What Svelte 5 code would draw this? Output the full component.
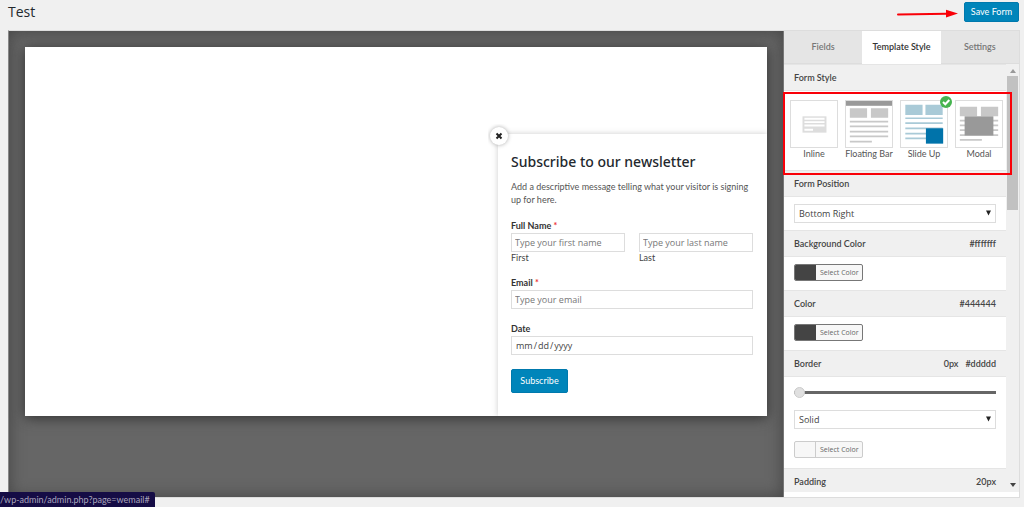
<script>
  let tabs = ["Fields", "Template Style", "Settings"];
  let activeTab = "Template Style";
  let styles = [
    { id: "inline", label: "Inline" },
    { id: "bar", label: "Floating Bar" },
    { id: "slide", label: "Slide Up" },
    { id: "modal", label: "Modal" }
  ];
  let activeStyle = "slide";
  let position = "Bottom Right";
  let borderStyle = "Solid";
  let borderWidth = 0;
  let background = "#fffffff";
  let color = "#444444";
  let borderColor = "#ddddd";
  let date = "";
</script>

<svelte:head>
  <title>Test</title>
</svelte:head>

<div class="page">
  <header>
    <h1>Test</h1>
    <svg class="arrow" viewBox="0 0 62 12" aria-hidden="true">
      <path d="M1 6.6 50 5.8" stroke="#f90008" stroke-width="2" stroke-linecap="round" />
      <path d="M49 1.8 61 5.6 49 9.4z" fill="#f90008" />
    </svg>
    <button class="primary save">Save Form</button>
  </header>

  <div class="builder">
    <main class="preview">
      <div class="canvas">
        <form class="popup" on:submit|preventDefault>
          <button type="button" class="close" aria-label="Close">
            <svg viewBox="0 0 8 8"><path d="M1.5 1.5 6.5 6.5M6.5 1.5 1.5 6.5" stroke="#222" stroke-width="2" /></svg>
          </button>
          <h2>Subscribe to our newsletter</h2>
          <p class="message">Add a descriptive message telling what your visitor is signing up for here.</p>

          <fieldset>
            <legend>Full Name <i>*</i></legend>
            <div class="names">
              <div>
                <input id="first" type="text" placeholder="Type your first name" />
                <label for="first">First</label>
              </div>
              <div>
                <input id="last" type="text" placeholder="Type your last name" />
                <label for="last">Last</label>
              </div>
            </div>
          </fieldset>

          <div class="field">
            <label for="email">Email <i>*</i></label>
            <input id="email" type="email" placeholder="Type your email" />
          </div>

          <div class="field">
            <label for="date">Date</label>
            <input id="date" type="date" bind:value={date} />
          </div>

          <button class="primary subscribe">Subscribe</button>
        </form>
      </div>
    </main>

    <aside>
      <nav>
        {#each tabs as tab}
          <button class:active={tab === activeTab} on:click={() => (activeTab = tab)}>{tab}</button>
        {/each}
      </nav>

      <div class="scroller">
        <div class="options">
          <h3>Form Style</h3>
          <div class="styles">
            {#each styles as style}
              <button class="style" on:click={() => (activeStyle = style.id)}>
                <span class="thumb">
                  <svg viewBox="0 0 48 48" aria-hidden="true">
                    {#if style.id === "inline"}
                      <rect x="12" y="16" width="25" height="17" fill="#ddd" />
                      <path d="M14 18.5h21M14 22h21M14 25.5h21M14 30h9" stroke="#fff" stroke-width="2" />
                    {:else if style.id === "bar"}
                      <rect x="0" y="0" width="48" height="5" fill="#999" />
                      <path d="M4 7.5h18v10H4zM26 7.5h18v10H26z" fill="#c8c8c8" />
                      <path d="M4 21.5h40M4 26.5h40M4 32h40M4 37h40M4 42.5h23" stroke="#c8c8c8" stroke-width="1.8" />
                    {:else if style.id === "slide"}
                      <path d="M4.5 4h18v10.5h-18zM25.5 4h18v10.5h-18z" fill="#a9cad7" />
                      <path d="M4.5 18h39M4.5 23h39M4.5 28.5h39M4.5 34h22M4.5 39h22" stroke="#a9cad7" stroke-width="1.8" />
                      <rect x="26" y="28.5" width="18" height="16" fill="#0073aa" />
                    {:else}
                      <path d="M4 6h18v10H4zM26 6h18v10H26z" fill="#c8c8c8" />
                      <path d="M4 20.5h40M4 25.5h40M4 30.5h40M4 35.5h40M4 40.5h23" stroke="#c8c8c8" stroke-width="1.8" />
                      <rect x="9" y="16" width="30" height="20" fill="#999" />
                    {/if}
                  </svg>
                  {#if style.id === activeStyle}
                    <svg class="check" viewBox="0 0 12 12" aria-hidden="true">
                      <circle cx="6" cy="6" r="6" fill="#46b450" />
                      <path d="M3 6 5.3 8.3 9.3 4" fill="none" stroke="#fff" stroke-width="2" />
                    </svg>
                  {/if}
                </span>
                {style.label}
              </button>
            {/each}
          </div>

          <h3><label for="position">Form Position</label></h3>
          <div class="option">
            <span class="select">
              <select id="position" bind:value={position}>
                <option>Bottom Right</option>
                <option>Bottom Left</option>
              </select>
              <svg viewBox="0 0 6 6" aria-hidden="true"><path d="M0 0h6L3 6z" fill="#222" /></svg>
            </span>
          </div>

          <h3>Background Color <span>{background}</span></h3>
          <div class="option">
            <button class="picker dark"><span class="swatch"></span>Select Color</button>
          </div>

          <h3>Color <span>{color}</span></h3>
          <div class="option">
            <button class="picker dark"><span class="swatch"></span>Select Color</button>
          </div>

          <h3><label for="border">Border</label> <span>{borderWidth}px</span> <span class="hex">{borderColor}</span></h3>
          <div class="option border">
            <input id="border" type="range" min="0" max="20" bind:value={borderWidth} />
            <span class="select">
              <select aria-label="Border style" bind:value={borderStyle}>
                <option>Solid</option>
                <option>Dashed</option>
              </select>
              <svg viewBox="0 0 6 6" aria-hidden="true"><path d="M0 0h6L3 6z" fill="#222" /></svg>
            </span>
            <button class="picker"><span class="swatch"></span>Select Color</button>
          </div>

          <h3>Padding <span>20px</span></h3>
        </div>
        <div class="scrollbar">
          <svg viewBox="0 0 6 4" aria-hidden="true"><path d="M0 4h6L3 0z" fill="#999" /></svg>
          <span class="handle"></span>
          <svg viewBox="0 0 6 4" aria-hidden="true"><path d="M0 0h6L3 4z" fill="#444" /></svg>
        </div>
      </div>
      <div class="highlight"></div>
    </aside>
  </div>

  <div class="status">/wp-admin/admin.php?page=wemail#</div>
</div>

<style>
  :global(body) {
    background: #f0f0f0;
    overflow: hidden;
  }

  .page,
  button {
    font-family: "Segoe UI", Lato, sans-serif;
  }

  h1,
  input,
  select,
  .picker {
    font-family: "Segoe UI", "Open Sans", sans-serif;
  }

  .page {
    height: 100vh;
    display: flex;
    flex-direction: column;
    color: #444;
    font-size: 9px;
    line-height: 12px;
  }

  .page * {
    box-sizing: border-box;
  }

  button {
    padding: 0;
    border: 0;
    font-size: 9px;
    line-height: 12px;
    cursor: pointer;
  }

  svg {
    display: block;
  }

  header {
    display: flex;
    align-items: center;
    height: 30px;
    padding: 0 5px 6px 8px;
  }

  h1 {
    flex: 1;
    margin: 0;
    font-size: 14px;
    font-weight: 400;
    color: #23282d;
  }

  .arrow {
    width: 62px;
    height: 12px;
    margin: 4px 5px 0 0;
  }

  .primary {
    background: #0085ba;
    border: 1px solid #0079ad;
    border-radius: 2px;
    color: #fff;
  }

  .save {
    width: 55px;
    height: 20px;
  }

  .builder {
    flex: 1;
    min-height: 0;
    display: flex;
    margin: 0 4px 9px 8px;
    border: 1px solid #ddd;
    border-left-color: #888;
  }

  .preview {
    flex: 1;
    padding: 16px;
    background: #666;
    box-shadow: inset 0 0 16px #444;
  }

  .canvas {
    display: flex;
    justify-content: flex-end;
    align-items: flex-end;
    height: 369px;
    background: #fff;
    box-shadow: 0 2px 12px #333;
  }

  .popup {
    position: relative;
    width: 269px;
    padding: 19px 14px 23px 13px;
    background: #fff;
    box-shadow: 0 0 6px #ccc;
    clip-path: inset(-10px 0 0 -10px);
  }

  .close {
    position: absolute;
    top: -7px;
    left: -8px;
    width: 18px;
    height: 18px;
    display: grid;
    place-items: center;
    border-radius: 50%;
    background: #fff;
    box-shadow: 0 0 4px #aaa;
  }

  .close svg {
    width: 8px;
    height: 8px;
  }

  h2 {
    margin: 0 0 9px;
    font-family: "Segoe UI", "Noto Sans", sans-serif;
    font-size: 14px;
    line-height: 18px;
    font-weight: 500;
    color: #23282d;
  }

  .message {
    margin: 0 0 14px;
    line-height: 13px;
    color: #555;
  }

  fieldset {
    margin: 0 0 13px;
    padding: 0;
    border: 0;
  }

  legend,
  .field label {
    display: block;
    height: 13px;
    padding: 0;
    font-weight: 700;
    color: #333;
  }

  i {
    font-style: normal;
    color: #e33;
  }

  .names {
    display: grid;
    grid-template-columns: 1fr 1fr;
    gap: 14px;
  }

  .names label {
    display: block;
  }

  .popup input {
    display: block;
    width: 100%;
    height: 19px;
    padding: 0 3px;
    border: 1px solid #ddd;
    background: #fff;
    color: #444;
    font-size: 9px;
  }

  ::placeholder {
    color: #777;
  }

  ::-webkit-calendar-picker-indicator {
    display: none;
  }

  .field {
    margin-bottom: 14px;
  }

  .subscribe {
    width: 57px;
    height: 24px;
  }

  aside {
    position: relative;
    flex: 0 0 236px;
    display: flex;
    flex-direction: column;
    padding-bottom: 5px;
    border-left: 1px solid #777;
    background: #fff;
  }

  nav {
    display: grid;
    grid-template-columns: repeat(3, 1fr);
    flex: 0 0 33px;
  }

  nav button {
    background: #e5e5e5;
    border-bottom: 1px solid #ddd;
    color: #777;
    font-weight: 600;
  }

  nav .active {
    background: #fff;
    border-bottom-color: #fff;
    color: #333;
  }

  .scroller {
    flex: 1;
    min-height: 0;
    display: flex;
    overflow: hidden;
  }

  .options {
    flex: 1;
  }

  h3 {
    display: flex;
    align-items: center;
    height: 27px;
    margin: 0;
    padding: 0 10px;
    background: #f0f0f0;
    border: solid #e5e5e5;
    border-width: 1px 0;
    font-size: 9px;
    font-weight: 600;
  }

  h3 span {
    margin-left: auto;
  }

  h3 .hex {
    margin-left: 7px;
  }

  .styles {
    display: flex;
    justify-content: space-between;
    height: 79px;
    padding: 9px 3px 0 6px;
  }

  .style {
    display: flex;
    flex-direction: column;
    align-items: center;
    width: 48px;
    background: none;
    color: #555;
    white-space: nowrap;
  }

  .thumb {
    position: relative;
    width: 48px;
    height: 48px;
    border: 1px solid #ddd;
  }

  .check {
    position: absolute;
    top: -5px;
    right: -5px;
    width: 12px;
    height: 12px;
  }

  .option {
    height: 33px;
    padding: 7px 10px;
  }

  .border {
    height: 91px;
  }

  .select {
    position: relative;
    display: block;
  }

  select {
    appearance: none;
    display: block;
    width: 100%;
    height: 19px;
    padding: 0 4px;
    border: 1px solid #ddd;
    border-radius: 0;
    background: #fff;
    color: #444;
    font-size: 9px;
  }

  .select svg {
    position: absolute;
    right: 5px;
    top: 6px;
    width: 5px;
    height: 6px;
  }

  .picker {
    display: flex;
    align-items: center;
    width: 69px;
    height: 17px;
    overflow: hidden;
    border: 1px solid #ccc;
    border-radius: 2px;
    background: #f7f7f7;
    color: #666;
    font-size: 7px;
    white-space: nowrap;
  }

  .swatch {
    width: 21px;
    height: 100%;
    margin-right: 4px;
    border-right: 1px solid #ccc;
  }

  .dark {
    border-color: #777;
  }

  .dark .swatch {
    background: #444;
    border-color: #444;
  }

  .border .select {
    margin: 10px 0 12px;
  }

  input[type="range"] {
    appearance: none;
    display: block;
    width: 100%;
    height: 16px;
    margin: 0;
    background: none;
  }

  input[type="range"]::-webkit-slider-runnable-track {
    height: 3px;
    background: #666;
  }

  input[type="range"]::-webkit-slider-thumb {
    appearance: none;
    width: 11px;
    height: 11px;
    margin-top: -4px;
    border: 1px solid #ccc;
    border-radius: 50%;
    background: #e0e0e0;
  }

  .scrollbar {
    flex: 0 0 13px;
    display: flex;
    flex-direction: column;
    align-items: center;
    padding: 5px 0;
    background: #f0f0f0;
  }

  .scrollbar svg {
    width: 6px;
    height: 4px;
  }

  .handle {
    width: 11px;
    height: 134px;
    margin: 3px 0 auto;
    background: #c1c1c1;
  }

  .highlight {
    position: absolute;
    top: 61px;
    left: -1px;
    width: 229px;
    height: 83px;
    border: 2px solid #f90008;
    pointer-events: none;
  }

  .status {
    position: fixed;
    left: 0;
    bottom: 0;
    width: 155px;
    height: 15px;
    line-height: 16px;
    background: #150c45;
    border-top-right-radius: 2px;
    color: #aaa6bd;
    white-space: nowrap;
  }
</style>
